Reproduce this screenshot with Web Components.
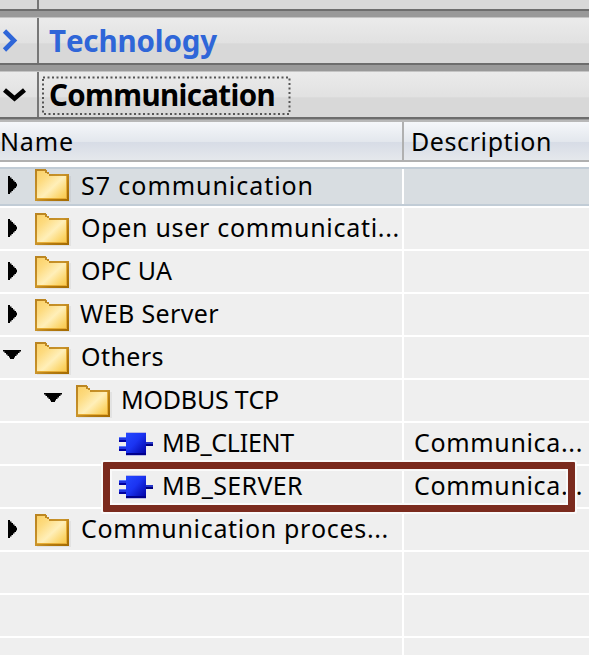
<!DOCTYPE html>
<html lang="en"><head><meta charset="utf-8"><title>Instructions</title>
<style>html,body{margin:0;width:589px;height:655px;overflow:hidden;background:#efefef;font-family:"Noto Sans","Open Sans",sans-serif}</style></head>
<body><instruction-panel></instruction-panel>
<script>
const root=(el,html)=>{const t=document.createElement('template');t.innerHTML=html;el.attachShadow({mode:'open'}).append(t.content.cloneNode(true));return el.shadowRoot};

// Single-line label whose tracking is adjusted to a given width.
customElements.define('fit-text',class extends HTMLElement{
 connectedCallback(){
  if(this.shadowRoot)return;
  const text=this.getAttribute('text'),w=+this.getAttribute('w');
  const r=root(this,`<style>:host{display:block;white-space:pre;color:inherit;flex:none}span{display:inline-block;font-kerning:none;font-variant-ligatures:none}</style><span></span>`);
  const s=r.querySelector('span');s.textContent=text;
  const n=s.getBoundingClientRect().width;
  if(n)s.style.letterSpacing=((w-n)/text.length)+'px';
 }});

customElements.define('folder-icon',class extends HTMLElement{
 connectedCallback(){root(this,`<style>:host{display:block;width:37px;height:35px;flex:none}svg{display:block}</style>
 <svg width="37" height="35" shape-rendering="crispEdges"><defs><linearGradient id="f" x1="0" y1="0" x2="1" y2="1"><stop offset="0" stop-color="#fbd168"/><stop offset=".25" stop-color="#fddb80"/><stop offset=".55" stop-color="#ffefb9"/><stop offset=".85" stop-color="#fbd365"/><stop offset="1" stop-color="#f9c549"/></linearGradient>
 <linearGradient id="b" x1="0" y1="0" x2="1" y2="1"><stop offset="0" stop-color="#b8821f"/><stop offset=".5" stop-color="#c9932a"/><stop offset=".7" stop-color="#b57b10"/><stop offset="1" stop-color="#a36a00"/></linearGradient></defs>
 <path d="M2 33H36V7H34V31H2z" fill="#000" opacity=".05"/>
 <path d="M0 0H11V1H12V3H14V5H34V32H0z" fill="url(#b)"/><path d="M2 2H10V4H12V5H14V7H32V30H2z" fill="url(#f)"/>
 <path d="M2 29H32V30H2zM31 7H32V30H31z" fill="#e6ad35"/></svg>`)}});

customElements.define('block-icon',class extends HTMLElement{
 connectedCallback(){root(this,`<style>:host{display:block;width:34px;height:24px;flex:none}svg{display:block}</style>
 <svg width="34" height="24" shape-rendering="crispEdges"><defs><linearGradient id="g" x1="0" y1="0" x2="1" y2="1"><stop offset="0" stop-color="#2448ff"/><stop offset=".45" stop-color="#1b34f2"/><stop offset="1" stop-color="#0000a0"/></linearGradient></defs>
 <path d="M7 0H27V24H7z" fill="#b9b9e4"/><path d="M0 5H7V6H0zM0 14H7V15H0z" fill="#5977ff"/><path d="M0 6H7V8H0zM0 15H7V17H0z" fill="#2035e0"/><path d="M0 8H7V10H0zM0 17H7V19H0z" fill="#0000a0"/>
 <path d="M27 10H34V12H27z" fill="#2435c8"/><path d="M27 12H34V14H27z" fill="#000080"/>
 <path d="M7 1H27V23H7z" fill="url(#g)"/><path d="M7 21H27V23H7z" fill="#00008c"/></svg>`)}});

customElements.define('tree-arrow',class extends HTMLElement{
 connectedCallback(){const o=this.hasAttribute('open');root(this,`<style>:host{display:block;width:18px;height:18px;flex:none}svg{display:block}</style>
 <svg width="18" height="18">${o?'<path d="M0 2H19V3.5H16.5V5H15V6.5H13.5V8H12V9.5H11V11H7V9.5H6V8H4.5V6.5H3V5H1.5V3.5H0z"/>':'<path d="M5 0H7V1.5H8.5V3H10V4.5H11.5V6H13V7.5H14V10.5H13V12H11.5V13.5H10V15H8.5V16.5H7V18H5z"/>'}</svg>`)}});

customElements.define('palette-bar',class extends HTMLElement{
 connectedCallback(){const o=this.hasAttribute('open');root(this,`<style>
 :host{display:flex;height:48px;box-sizing:border-box;border-top:1px solid #c4c4c4;border-bottom:2px solid #6d6d6d;background:linear-gradient(#ebebeb 0,#e1e1e1 56%,#d8d8d8 57%,#d8d8d8 100%)}
 .t{width:37px;box-sizing:content-box;border-right:2px solid #777;display:flex}
 .t svg{display:block}
 .l{margin:4px 0 0 2px;box-sizing:border-box;height:39px;width:251px;padding:1px 0 0 8px;font-size:29.5px;font-weight:700;line-height:35px;color:${o?'#000':'#2f66d8'};position:relative}
 .l svg{position:absolute;left:0;top:0}
 </style><div class="t"><svg width="37" height="43">${o?'<path d="M4.5 18L14.5 26.5L24.5 18" fill="none" stroke="#000" stroke-width="4.6"/>':'<path d="M4.5 13L14 22.5L4.5 32" fill="none" stroke="#2f66d8" stroke-width="4.6"/>'}</svg></div>
 <div class="l">${o?'<svg width="251" height="39"><rect x="2" y="1.5" width="246.5" height="36.5" fill="none" stroke="#555" stroke-width="2" stroke-dasharray="2 2.5"/></svg>':''}<fit-text text="${this.getAttribute('label')}" w="${this.getAttribute('w')}"></fit-text></div>`)}});

customElements.define('tree-row',class extends HTMLElement{
 connectedCallback(){const a=n=>this.getAttribute(n),lv=+(a('level')||0),k=a('kind'),sel=this.hasAttribute('selected');
 root(this,`<style>
 :host{display:grid;grid-template-columns:403px 1fr;height:43px;box-sizing:border-box;border-bottom:2px solid #fff;font-size:25px;line-height:34px;background:#efefef;color:#000}
 :host([selected]){background:#d8dde1;border-top:2px solid #c1ccd6;border-bottom:2px solid #c1ccd6;height:39px;margin:2px 0 2px}
 .n{display:flex;border-right:2px solid #fff;box-sizing:border-box;width:404px}
 .a{padding:${sel?7:11}px 0 0 ${lv?44:3}px}
 .i{padding:${sel?0:5}px 0 0 14px}
 .b{padding:9px 0 0 119px}
 .x{padding:${sel?0:2}px 0 0 ${k==='block'||(!lv&&a('label')!=='WEB Server')?9:8}px}
 .x fit-text{margin-top:${sel?-1:0}px}
 .d{padding:2px 0 0 11px}
 </style><div class="n">${k==='folder'?`<div class="a"><tree-arrow ${this.hasAttribute('open')?'open':''}></tree-arrow></div><div class="i"><folder-icon></folder-icon></div>`:k==='block'?'<div class="b"><block-icon></block-icon></div>':''}
 ${a('label')?`<div class="x"><fit-text text="${a('label')}" w="${a('w')}"></fit-text></div>`:''}</div><div class="d">${a('desc')?`<fit-text text="${a('desc')}" w="169"></fit-text>`:''}</div>`)}});

customElements.define('instruction-panel',class extends HTMLElement{
 connectedCallback(){root(this,`<style>
 :host{display:block;position:relative;width:589px;height:655px;overflow:hidden;background:#999}
 .top{height:11px;box-sizing:border-box;border-bottom:2px solid #6d6d6d;background:#d8d8d8;display:flex}
 .top i{margin-left:37px;width:2px;background:#777}
 palette-bar{margin-top:6px}
 .head{margin-top:1px;height:42px;box-sizing:border-box;border-top:2px solid #b8b8b8;border-bottom:2px solid #b0b0b0;display:grid;grid-template-columns:402px 1fr;font-size:25px;line-height:34px;background:linear-gradient(#f5f7fa,#e3e7ed 52%,#d7dce6 53%,#e5e8ec)}
 .head div{padding-top:2px}.head .d{border-left:2px solid #b0b0b0;padding-left:7px}
 .rows{padding-top:3px;background:#fff}
 .mark{position:absolute;left:103px;top:462px;width:472px;height:50px;box-sizing:border-box;border:7px solid #7b2b1e;border-radius:1px;box-shadow:0 0 0 2px #fafafa,inset 0 0 0 2px #fafafa}
 </style>
 <div class="top"><i></i></div>
 <palette-bar label="Technology" w="168"></palette-bar>
 <palette-bar open label="Communication" w="226"></palette-bar>
 <div class="head"><div><fit-text text="Name" w="74"></fit-text></div><div class="d"><fit-text text="Description" w="141"></fit-text></div></div>
 <div class="rows">
 <tree-row selected kind="folder" label="S7 communication" w="233"></tree-row>
 <tree-row kind="folder" label="Open user communicati..." w="319"></tree-row>
 <tree-row kind="folder" label="OPC UA" w="91"></tree-row>
 <tree-row kind="folder" label="WEB Server" w="139"></tree-row>
 <tree-row kind="folder" open label="Others" w="83"></tree-row>
 <tree-row kind="folder" open level="1" label="MODBUS TCP" w="158"></tree-row>
 <tree-row kind="block" label="MB_CLIENT" w="132" desc="Communica..."></tree-row>
 <tree-row kind="block" label="MB_SERVER" w="141" desc="Communica..."></tree-row>
 <tree-row kind="folder" label="Communication proces..." w="308"></tree-row>
 <tree-row></tree-row><tree-row></tree-row><tree-row></tree-row>
 </div><div class="mark"></div>`)}});
</script></body></html>
